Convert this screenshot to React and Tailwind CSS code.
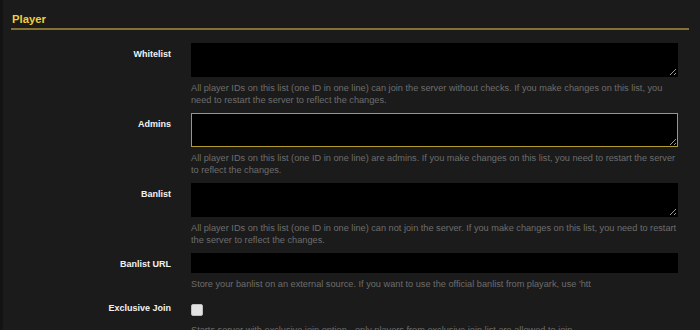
import { useState } from "react";

const rows = [
  {
    key: "whitelist",
    label: "Whitelist",
    type: "textarea",
    help: "All player IDs on this list (one ID in one line) can join the server without checks. If you make changes on this list, you need to restart the server to reflect the changes.",
  },
  {
    key: "admins",
    label: "Admins",
    type: "textarea",
    help: "All player IDs on this list (one ID in one line) are admins. If you make changes on this list, you need to restart the server to reflect the changes.",
  },
  {
    key: "banlist",
    label: "Banlist",
    type: "textarea",
    help: "All player IDs on this list (one ID in one line) can not join the server. If you make changes on this list, you need to restart the server to reflect the changes.",
  },
  {
    key: "banlistUrl",
    label: "Banlist URL",
    type: "input",
    help: "Store your banlist on an external source. If you want to use the official banlist from playark, use 'htt",
  },
  {
    key: "exclusiveJoin",
    label: "Exclusive Join",
    type: "checkbox",
    help: "Starts server with exclusive join option - only players from exclusive join list are allowed to join.",
  },
];

export default function App() {
  const [values, setValues] = useState({
    whitelist: "",
    admins: "",
    banlist: "",
    banlistUrl: "",
    exclusiveJoin: false,
  });

  const handleChange = (e) => {
    const { name, value, checked, type } = e.target;
    setValues({ ...values, [name]: type === "checkbox" ? checked : value });
  };

  return (
    <div
      className="min-h-screen flex bg-[#1b1b1b]"
      style={{ fontFamily: '"Liberation Sans", Arial, sans-serif' }}
    >
      <div className="w-[3px] bg-[#131313]" />
      <div className="flex-1 pl-[8px] pr-[11px] pt-[12px]">
        {/* Section header */}
        <h2 className="text-[11.3px] leading-[14px] font-bold text-[#f2cd3a] pl-[1px] pb-[2px] border-b-2 border-[#847233]">
          Player
        </h2>

        {/* Settings */}
        <div className="mt-[13px] pr-[11px] grid grid-cols-[160px_1fr] gap-x-[20px]">
          {rows.map((row) => (
            <div key={row.key} className="contents">
              <label className="text-right text-[9px] leading-[12px] font-bold text-[#f2f2f2] pt-[5px]">
                {row.label}
              </label>
              <div className="mb-[7px]">
                {row.type === "textarea" && (
                  <textarea
                    name={row.key}
                    value={values[row.key]}
                    onChange={handleChange}
                    className={
                      row.key === "admins"
                        ? "block w-full h-[34px] bg-black border border-[#b39a2e] text-white text-[9px] outline-none"
                        : "block w-full h-[34px] bg-black border border-black text-white text-[9px] outline-none"
                    }
                  />
                )}
                {row.type === "input" && (
                  <input
                    type="text"
                    name={row.key}
                    value={values[row.key]}
                    onChange={handleChange}
                    className="block w-full h-[20px] bg-black border border-black text-white text-[9px] outline-none"
                  />
                )}
                {row.type === "checkbox" && (
                  <input
                    type="checkbox"
                    name={row.key}
                    checked={values[row.key]}
                    onChange={handleChange}
                    className="block appearance-none mt-[7px] w-[12px] h-[12px] bg-[#e2e2e2] border border-[#bdbdbd] rounded-[2px]"
                  />
                )}
                <p
                  className={
                    row.type === "checkbox"
                      ? "mt-[8px] text-[9.2px] leading-[12px] text-[#6d6d6d]"
                      : "mt-[5px] text-[9.2px] leading-[12px] text-[#6d6d6d]"
                  }
                >
                  {row.help}
                </p>
              </div>
            </div>
          ))}
        </div>
      </div>
    </div>
  );
}
